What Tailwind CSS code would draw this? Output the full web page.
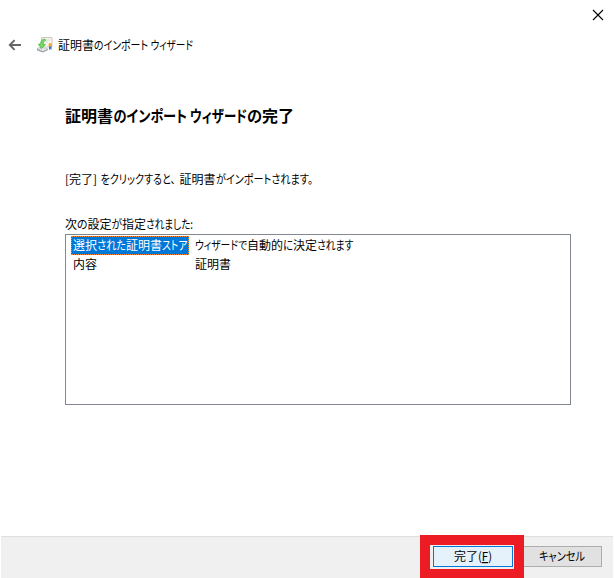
<!DOCTYPE html>
<html lang="ja">
<head>
<meta charset="utf-8">
<title>証明書のインポート ウィザード</title>
<script src="https://cdn.jsdelivr.net/npm/@tailwindcss/browser@4"></script>
</head>
<body class="w-[614px] h-[578px] overflow-hidden bg-white text-black text-[12px] font-['Noto_Sans_CJK_JP',sans-serif] [font-feature-settings:'palt']">
<div class="flex flex-col h-[578px]">
  <header class="h-[30px] shrink-0 flex justify-end pt-[9px] pr-[10px]">
    <svg width="12" height="12" viewBox="0 0 12 12" fill="none" stroke="#000" stroke-width="1.1"><path d="M1 1l10 10M11 1L1 11"/></svg>
  </header>
  <div class="h-[30px] shrink-0 flex items-center pl-[8px]">
    <svg width="14" height="12" viewBox="0 0 14 12" fill="none" stroke="#666" stroke-width="1.9"><path d="M13 6H2M6.600 1.200L1.800 6l4.800 4.800"/></svg>
    <svg class="ml-[14px]" width="18" height="18" viewBox="0 0 18 18">
      <path d="M5.500 1.500h10.500v9.500H5.500z" fill="#f6f4ec" stroke="#c4c2ba" stroke-width=".9"/>
      <path d="M9 4h5M9 6h3" stroke="#cfd8e0" stroke-width=".8"/>
      <path d="M1 12.500l4-1.500 7 2-5 2.500z" fill="#e3e5e8" stroke="#b4b8bc" stroke-width=".6"/>
      <path d="M1 12.800v1.500l6 2.200 5-2.500v-1l-5 2.500z" fill="#969ba0"/>
      <path d="M9 3C6 3 4.500 5 4.500 8H2.300l3 4.800L9.500 8.500H7.300C7.300 6 8 5 9.500 4.500z" fill="#74d662" stroke="#44b045" stroke-width=".6"/>
      <path d="M13 10v4l1.200-1 1.300 1v-4z" fill="#407fc4"/>
      <circle cx="14.200" cy="8.800" r="1.800" fill="#efae35"/>
    </svg>
    <svg class="ml-[3px] overflow-visible" width="160" height="20" font-size="12">
      <text x="1" y="15" textLength="36" lengthAdjust="spacingAndGlyphs">証明書</text>
      <text x="37" y="15" textLength="54" lengthAdjust="spacingAndGlyphs">のインポート</text>
      <text x="93.500" y="15" textLength="42.500" lengthAdjust="spacingAndGlyphs">ウィザード</text>
    </svg>
  </div>
  <main class="flex-1 pl-[65px] pr-[43px] pt-[44px]">
    <h1 class="h-[24px]"><svg class="overflow-visible" width="240" height="24" font-size="16" font-weight="700">
      <text x="0" y="18" textLength="48" lengthAdjust="spacingAndGlyphs">証明書</text>
      <text x="48.500" y="18" textLength="73.500" lengthAdjust="spacingAndGlyphs">のインポート</text>
      <text x="125" y="18" textLength="57" lengthAdjust="spacingAndGlyphs">ウィザード</text>
      <text x="182" y="18" textLength="15" lengthAdjust="spacingAndGlyphs">の</text>
      <text x="197" y="18" textLength="32" lengthAdjust="spacingAndGlyphs">完了</text>
    </svg></h1>
    <p class="h-[20px] mt-[42px]"><svg class="overflow-visible" width="270" height="20" font-size="12">
      <text x="0" y="14" textLength="4" lengthAdjust="spacingAndGlyphs">[</text>
      <text x="4" y="14" textLength="24" lengthAdjust="spacingAndGlyphs">完了</text>
      <text x="28" y="14" textLength="4" lengthAdjust="spacingAndGlyphs">]</text>
      <text x="35.500" y="14" textLength="75" lengthAdjust="spacingAndGlyphs">をクリックすると、</text>
      <text x="114.500" y="14" textLength="36" lengthAdjust="spacingAndGlyphs">証明書</text>
      <text x="151" y="14" textLength="97" lengthAdjust="spacingAndGlyphs">がインポートされます。</text>
    </svg></p>
    <p class="h-[20px] mt-[24px]"><svg class="overflow-visible" width="200" height="20" font-size="12">
      <text x="0" y="14.500" textLength="12" lengthAdjust="spacingAndGlyphs">次</text>
      <text x="12" y="14.500" textLength="10.500" lengthAdjust="spacingAndGlyphs">の</text>
      <text x="22.500" y="14.500" textLength="24" lengthAdjust="spacingAndGlyphs">設定</text>
      <text x="46.500" y="14.500" textLength="10.500" lengthAdjust="spacingAndGlyphs">が</text>
      <text x="57" y="14.500" textLength="24" lengthAdjust="spacingAndGlyphs">指定</text>
      <text x="81" y="14.500" textLength="47" lengthAdjust="spacingAndGlyphs">されました:</text>
    </svg></p>
    <div class="h-[171px] border border-[#828790] pl-[5px] pt-px">
      <div class="flex">
        <div class="w-[118px] h-[19px] bg-[#0078d7] border border-dotted border-[#ff8728]"><svg class="overflow-visible" width="116" height="17" font-size="12" fill="#fff">
          <text x="1" y="13" textLength="24" lengthAdjust="spacingAndGlyphs">選択</text>
          <text x="25" y="13" textLength="29" lengthAdjust="spacingAndGlyphs">された</text>
          <text x="54" y="13" textLength="36" lengthAdjust="spacingAndGlyphs">証明書</text>
          <text x="90" y="13" textLength="25.500" lengthAdjust="spacingAndGlyphs">ストア</text>
        </svg></div>
        <svg class="ml-[5px] overflow-visible" width="190" height="19" font-size="12">
          <text x="1" y="14" textLength="52" lengthAdjust="spacingAndGlyphs">ウィザードで</text>
          <text x="53" y="14" textLength="36" lengthAdjust="spacingAndGlyphs">自動的</text>
          <text x="89" y="14" textLength="10" lengthAdjust="spacingAndGlyphs">に</text>
          <text x="99" y="14" textLength="24" lengthAdjust="spacingAndGlyphs">決定</text>
          <text x="123" y="14" textLength="36.500" lengthAdjust="spacingAndGlyphs">されます</text>
        </svg>
      </div>
      <div class="flex">
        <svg width="118" height="19" font-size="12"><text x="2" y="14" textLength="24" lengthAdjust="spacingAndGlyphs">内容</text></svg>
        <svg class="ml-[5px]" width="100" height="19" font-size="12"><text x="1" y="14" textLength="36" lengthAdjust="spacingAndGlyphs">証明書</text></svg>
      </div>
    </div>
  </main>
  <footer class="h-[42px] shrink-0 mx-px bg-[#f0f0f0] border-t border-[#dfdfdf] flex items-start justify-end pr-[11px]">
    <div class="w-[104px] h-[43px] -mt-[2px] bg-[#ed1c24] pl-[10px] pt-[10px] relative">
      <div class="w-[84px] h-[24px] bg-[#f0f0f0] pl-[3px] pt-px">
        <button class="block w-[80px] h-[21px] bg-[#e5f1fb] border border-[#0078d7]"><svg width="78" height="19" font-size="12">
          <text x="20" y="14" textLength="24" lengthAdjust="spacingAndGlyphs">完了</text>
          <text x="44" y="14" textLength="14" lengthAdjust="spacingAndGlyphs">(<tspan text-decoration="underline">F</tspan>)</text>
        </svg></button>
      </div>
    </div>
    <button class="w-[78px] h-[21px] mt-[9px] bg-[#e1e1e1] border border-l-0 border-[#adadad]"><svg width="77" height="19" font-size="12"><text x="15" y="14" textLength="46" lengthAdjust="spacingAndGlyphs">キャンセル</text></svg></button>
  </footer>
</div>
</body>
</html>
